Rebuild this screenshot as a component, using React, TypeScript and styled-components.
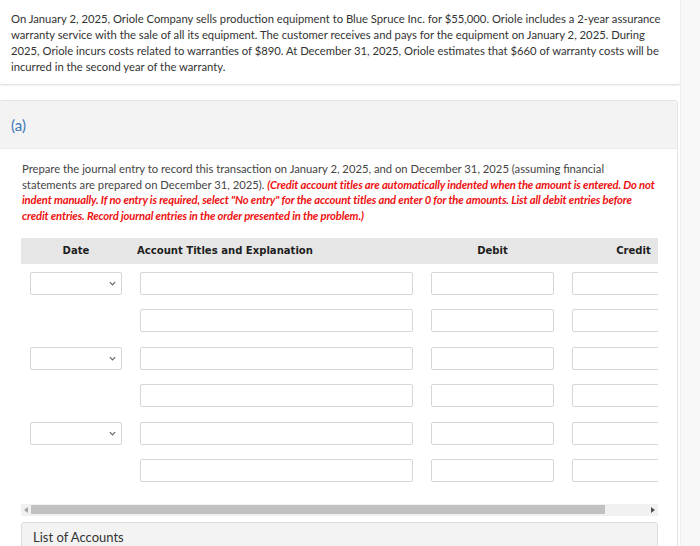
import React from "react";
import styled, { createGlobalStyle } from "styled-components";

const GlobalStyle = createGlobalStyle`
  html, body {
    margin: 0;
    padding: 0;
    background: #ffffff;
  }
  body {
    font-family: Lato, "Open Sans", sans-serif;
    color: #333333;
  }
`;

const rows = [
  { date: true },
  { date: false },
  { date: true },
  { date: false },
  { date: true },
  { date: false },
];

const App: React.FC = () => {
  return (
    <>
      <GlobalStyle />
      <Page>
        <Main>
          <ProblemCard>
            On January 2, 2025, Oriole Company sells production equipment to
            Blue Spruce Inc. for $55,000. Oriole includes a 2-year assurance
            warranty service with the sale of all its equipment. The customer
            receives and pays for the equipment on January 2, 2025. During
            2025, Oriole incurs costs related to warranties of $890. At
            December 31, 2025, Oriole estimates that $660 of warranty costs
            will be incurred in the second year of the warranty.
          </ProblemCard>
          <PartCard>
            <PartHeader>(a)</PartHeader>
            <PartBody>
              <Instructions>
                Prepare the journal entry to record this transaction on
                January 2, 2025, and on December 31, 2025 (assuming financial
                statements are prepared on December 31, 2025).{" "}
                <Warning>
                  (Credit account titles are automatically indented when the
                  amount is entered. Do not indent manually. If no entry is
                  required, select "No entry" for the account titles and enter
                  0 for the amounts. List all debit entries before credit
                  entries. Record journal entries in the order presented in
                  the problem.)
                </Warning>
              </Instructions>
              <TableScroller>
                <JournalTable>
                  <HeadCell $align="center">Date</HeadCell>
                  <HeadCell $align="left">Account Titles and Explanation</HeadCell>
                  <HeadCell $align="center">Debit</HeadCell>
                  <HeadCell $align="center">Credit</HeadCell>
                  {rows.map((r, i) => (
                    <React.Fragment key={i}>
                      <Cell>
                        {r.date && (
                          <DateSelect>
                            <Chevron viewBox="0 0 8 5">
                              <path
                                d="M1 1l3 3 3-3"
                                fill="none"
                                stroke="#666"
                                strokeWidth="1.4"
                              />
                            </Chevron>
                          </DateSelect>
                        )}
                      </Cell>
                      <Cell>
                        <TextBox />
                      </Cell>
                      <Cell>
                        <TextBox />
                      </Cell>
                      <Cell>
                        <TextBox />
                      </Cell>
                    </React.Fragment>
                  ))}
                </JournalTable>
              </TableScroller>
              <ScrollBar>
                <ArrowBtn>
                  <svg width="4" height="6" viewBox="0 0 4 6">
                    <path d="M4 0L0 3l4 3z" fill="#a3a3a3" />
                  </svg>
                </ArrowBtn>
                <Thumb />
                <ArrowBtn>
                  <svg width="4" height="6" viewBox="0 0 4 6">
                    <path d="M0 0l4 3-4 3z" fill="#505050" />
                  </svg>
                </ArrowBtn>
              </ScrollBar>
              <AccountsPanel>List of Accounts</AccountsPanel>
            </PartBody>
          </PartCard>
        </Main>
        <SideStrip />
      </Page>
    </>
  );
};

export default App;

const Page = styled.div`
  display: flex;
  width: 700px;
  height: 546px;
  overflow: hidden;
`;

const Main = styled.div`
  width: 680px;
  display: flex;
  flex-direction: column;
  gap: 15px;
`;

const SideStrip = styled.div`
  width: 20px;
  background: #f8f8f8;
  border-left: 1px solid #f0f0f0;
`;

const ProblemCard = styled.div`
  margin-left: -1px;
  width: 651px;
  border: 1px solid #e4e4e4;
  border-top: none;
  border-radius: 0 0 3px 3px;
  box-shadow: 0 1px 2px rgba(0, 0, 0, 0.06);
  padding: 11px 18px 9px 11px;
  font-size: 11.25px;
  line-height: 16px;
  color: #333333;
`;

const PartCard = styled.div`
  margin-left: -1px;
  width: 679px;
  border: 1px solid #e4e4e4;
  border-radius: 3px;
  flex: 1;
  box-sizing: border-box;
`;

const PartHeader = styled.div`
  height: 47px;
  background: #f3f3f3;
  border-bottom: 1px solid #ececec;
  display: flex;
  align-items: center;
  padding-left: 11px;
  font-size: 15px;
  color: #3b78b8;
`;

const PartBody = styled.div`
  padding: 12px 0 0 21px;
`;

const Instructions = styled.div`
  padding: 0 18px 0 1px;
  font-size: 11.25px;
  line-height: 15.7px;
  color: #444444;
`;

const Warning = styled.span`
  color: #ee1111;
  font-style: italic;
  font-weight: 700;
  letter-spacing: -0.15px;
`;

const TableScroller = styled.div`
  width: 637px;
  overflow: hidden;
  margin-top: 14px;
`;

const JournalTable = styled.div`
  display: grid;
  grid-template-columns: 110px 291px 141px 141px;
  grid-auto-rows: auto;
  width: 683px;
  padding-bottom: 8px;
`;

const HeadCell = styled.div<{ $align: "left" | "center" }>`
  height: 26px;
  background: #e6e6e6;
  display: flex;
  align-items: center;
  justify-content: ${(p) => (p.$align === "center" ? "center" : "flex-start")};
  padding-left: ${(p) => (p.$align === "center" ? "0" : "6px")};
  margin-bottom: 8px;
  font-family: "DejaVu Sans Condensed", "DejaVu Sans", sans-serif;
  font-weight: 700;
  font-size: 11.2px;
  color: #1e1e1e;
`;

const Cell = styled.div`
  height: 23px;
  padding: 0 9px;
  margin-bottom: 14.5px;
`;

const TextBox = styled.div`
  height: 23px;
  box-sizing: border-box;
  border: 1px solid #d6d6d6;
  border-radius: 2px;
  background: #ffffff;
`;

const DateSelect = styled.div`
  height: 23px;
  box-sizing: border-box;
  border: 1px solid #d6d6d6;
  border-radius: 2px;
  display: flex;
  align-items: center;
  justify-content: flex-end;
  padding-right: 5px;
`;

const Chevron = styled.svg`
  width: 7px;
  height: 5px;
`;

const ScrollBar = styled.div`
  margin-top: -1px;
  width: 637px;
  height: 12px;
  background: #f1f1f1;
  display: flex;
  align-items: center;
`;

const ArrowBtn = styled.div`
  width: 10px;
  height: 12px;
  display: flex;
  align-items: center;
  justify-content: center;
`;

const Thumb = styled.div`
  width: 574px;
  height: 9px;
  background: #c1c1c1;
  margin-right: auto;
`;

const AccountsPanel = styled.div`
  margin-top: 6px;
  width: 637px;
  box-sizing: border-box;
  height: 40px;
  background: #f3f3f3;
  border: 1px solid #dddddd;
  border-radius: 3px;
  padding: 6px 0 0 11px;
  font-size: 13px;
  color: #333333;
`;
